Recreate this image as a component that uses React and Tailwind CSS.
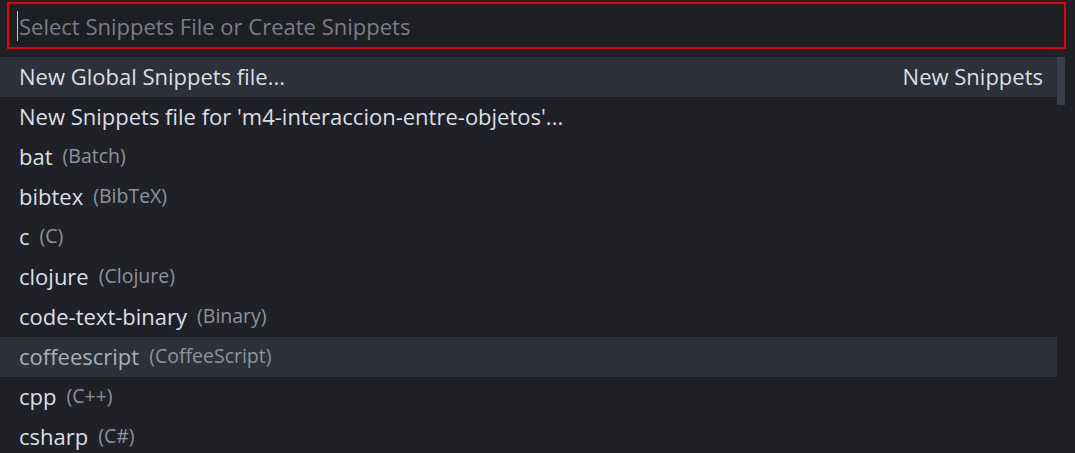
import React from 'react';

const items = [
  { label: 'New Global Snippets file...', detail: 'New Snippets', selected: true },
  { label: "New Snippets file for 'm4-interaccion-entre-objetos'..." },
  { label: 'bat', desc: '(Batch)' },
  { label: 'bibtex', desc: '(BibTeX)' },
  { label: 'c', desc: '(C)' },
  { label: 'clojure', desc: '(Clojure)' },
  { label: 'code-text-binary', desc: '(Binary)' },
  { label: 'coffeescript', desc: '(CoffeeScript)', hovered: true },
  { label: 'cpp', desc: '(C++)' },
  { label: 'csharp', desc: '(C#)' },
];

export default function App() {
  return (
    <div className="w-[1075px] h-[453px] overflow-hidden bg-[#1f2127] font-['Open_Sans',sans-serif]">
      {/* Input */}
      <div className="pt-[2px] pl-[7px] pr-[9px] pb-[8px]">
        <div className="h-[47px] border-2 border-[#e60000] bg-[#1d1f24] flex items-center pl-[8px]">
          <span className="w-px h-[30px] bg-[#c8cad0]" />
          <span className="ml-px text-[22px] leading-none text-[#7b7e85]">Select Snippets File or Create Snippets</span>
        </div>
      </div>

      {/* List */}
      <div className="flex">
        <div className="flex-1">
          {items.map((it) => (
            <div
              key={it.label}
              className={`h-[40px] flex items-center pl-[19px] pr-[14px] pb-[2px] ${it.selected || it.hovered ? 'bg-[#2c313a]' : ''}`}
            >
              <span className={`text-[22px] leading-none ${it.hovered ? 'text-[#a9afba]' : 'text-[#dcdfe4]'}`}>{it.label}</span>
              {it.desc && <span className="ml-[10px] text-[19.5px] leading-none text-[#8f939b]">{it.desc}</span>}
              {it.detail && <span className="ml-auto text-[22px] leading-none text-[#dcdfe4]">{it.detail}</span>}
            </div>
          ))}
        </div>
        <div className="w-[18px] relative">
          <div className="absolute left-0 top-0 w-[8px] h-[48px] bg-[#3a3f4b]" />
        </div>
      </div>
    </div>
  );
}
